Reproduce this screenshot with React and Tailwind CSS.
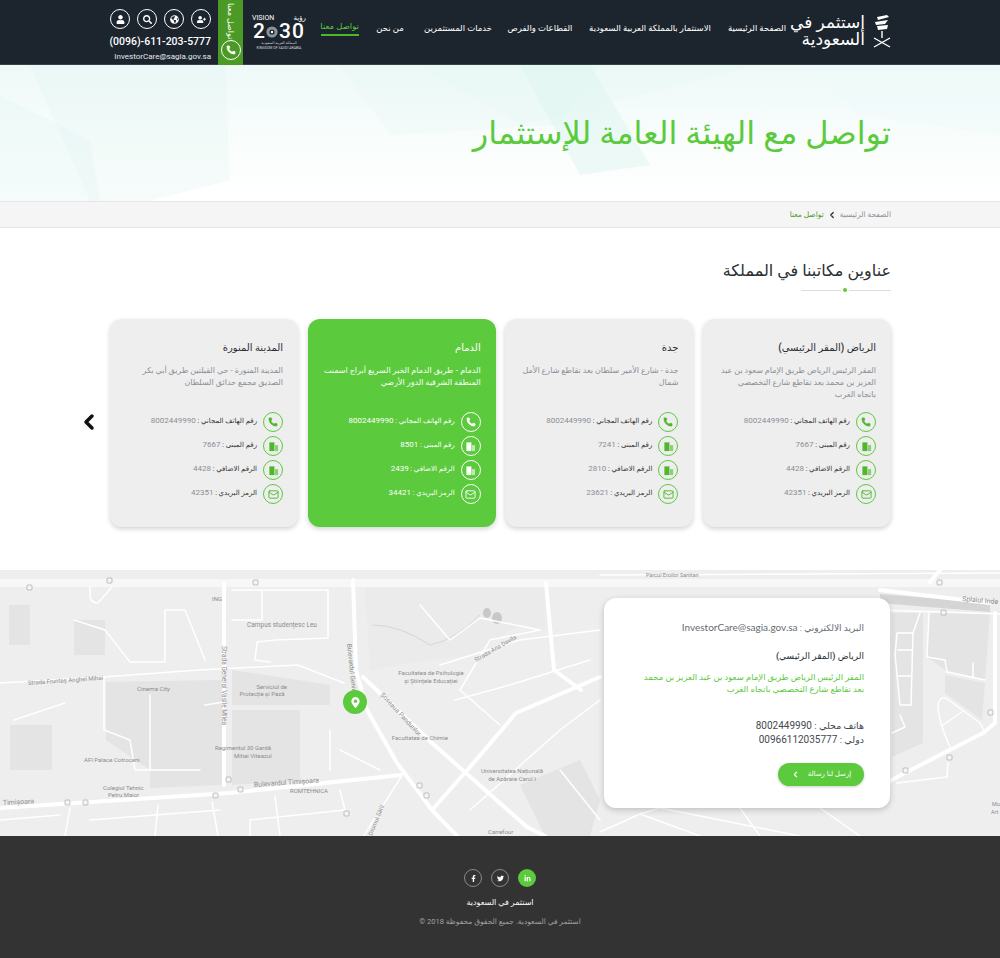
import React from 'react';
import { ChevronLeft, Mail, Phone } from 'lucide-react';
import { FaFacebookF, FaTwitter, FaLinkedinIn, FaUser, FaSearch, FaGlobeAmericas, FaUserPlus, FaMapMarkerAlt } from 'react-icons/fa';

const navItems = [
  { label: 'الصفحة الرئيسية', w: 'w-[84px]' },
  { label: 'الاستثمار بالمملكة العربية السعودية', w: 'w-[130px]' },
  { label: 'القطاعات والفرص', w: 'w-[90px]' },
  { label: 'خدمات المستثمرين', w: 'w-[74px]' },
  { label: 'من نحن', w: 'w-[62px]' },
];

const offices = [
  {
    title: 'الرياض (المقر الرئيسي)',
    address: ['المقر الرئيس الرياض طريق الإمام سعود بن عبد', 'العزيز بن محمد بعد تقاطع شارع التخصصي', 'باتجاه الغرب'],
    building: '7667',
    extra: '4428',
    postal: '42351',
  },
  {
    title: 'جدة',
    address: ['جدة - شارع الأمير سلطان بعد تقاطع شارع الأمل', 'شمال'],
    building: '7241',
    extra: '2810',
    postal: '23621',
  },
  {
    title: 'الدمام',
    address: ['الدمام - طريق الدمام الخبر السريع أبراج اسمنت', 'المنطقة الشرقية الدور الأرضي'],
    building: '8501',
    extra: '2439',
    postal: '34421',
    active: true,
  },
  {
    title: 'المدينة المنورة',
    address: ['المدينة المنورة - حي القبلتين طريق أبي بكر', 'الصديق مجمع حدائق السلطان'],
    building: '7667',
    extra: '4428',
    postal: '42351',
  },
];

function BuildingIcon() {
  return (
    <svg width="11" height="11" viewBox="0 0 12 12" fill="currentColor">
      <path d="M1.5 1.5h5.5v9.5H1.5z" />
      <path d="M7.6 4.5H11V11H7.6z" fillOpacity="0.6" />
    </svg>
  );
}

function TopIcon({ children }) {
  return (
    <div className="flex h-5 w-5 items-center justify-center rounded-full border border-white text-[9px] text-white">
      {children}
    </div>
  );
}

function Logo() {
  return (
    <div className="flex w-[92px] items-center gap-[8px]">
      <svg width="18" height="34" viewBox="0 0 18 34" fill="none" stroke="#fff" className="shrink-0">
        <path d="M4 3 L14 1 L16 3 L5 6 Z" fill="#fff" stroke="none" />
        <path d="M2 8 L15 6 L12 10 L3 11 Z" fill="#fff" stroke="none" />
        <path d="M4 12 L15 11 L14 15 L5 16 Z" fill="#fff" stroke="none" />
        <path d="M9 17 V24" strokeWidth="1.4" />
        <path d="M1 24 L17 33 M17 24 L1 33" strokeWidth="1.4" />
      </svg>
      <div className="whitespace-nowrap text-[17px] leading-[17px] text-white">
        <div>إستثمر في</div>
        <div>السعودية</div>
      </div>
    </div>
  );
}

function Vision() {
  return (
    <div className="flex w-[54px] flex-col items-center text-white" dir="ltr">
      <div className="flex w-full items-center justify-between text-[7px] leading-[8px]">
        <span>VISION</span>
        <span>رؤية</span>
      </div>
      <div className="flex h-[19px] items-center text-[21px] font-medium leading-[19px] tracking-[1px]">
        <span>2</span>
        <svg width="12" height="12" viewBox="0 0 12 12" className="mr-[1px]">
          <circle cx="6" cy="6" r="5.6" fill="#8b949a" />
          <circle cx="6" cy="6" r="2.6" fill="#1c252e" />
          <circle cx="6" cy="6" r="1.2" fill="#fff" />
        </svg>
        <span>30</span>
      </div>
      <div className="h-[5px] whitespace-nowrap text-[3.5px] leading-[5px] text-gray-300">المملكة العربية السعودية</div>
      <div className="h-[5px] whitespace-nowrap text-[3.5px] leading-[5px] text-gray-300">KINGDOM OF SAUDI ARABIA</div>
    </div>
  );
}

function Header() {
  return (
    <header className="h-[65px] border-b border-[#3a4249] bg-[#1c252e]">
      <div className="ml-[110px] flex h-full w-[781px] items-start justify-between" dir="rtl">
        <div className="flex h-full items-center pb-[3px]">
          <Logo />
          <nav className="flex items-center pb-[5px] text-[8.5px] text-white">
            {navItems.map((item) => (
              <a key={item.label} className={`${item.w} flex justify-center whitespace-nowrap`}>{item.label}</a>
            ))}
            <a className="w-[38px] whitespace-nowrap border-b-2 border-[#4eb82b] pb-[2px] text-center text-[8.5px] text-[#5bca3c]">تواصل معنا</a>
          </nav>
        </div>
        <div className="flex h-full items-start">
          <div className="ml-[9px] mt-[14px]"><Vision /></div>
          <div className="flex h-[65px] w-[25px] flex-col items-center bg-[#4a9a25] pt-[3px]">
            <span className="flex h-[36px] items-center justify-center whitespace-nowrap text-[8px] leading-[25px] text-white [writing-mode:vertical-rl]">تواصل معنا</span>
            <div className="mt-[1px] flex h-5 w-5 items-center justify-center rounded-full border border-white text-white">
              <Phone size={10} fill="currentColor" strokeWidth={1} />
            </div>
          </div>
          <div className="mr-[7px] flex w-[101px] flex-col items-end pt-[9px]" dir="ltr">
            <div className="flex gap-[7px]">
              <TopIcon><FaUser /></TopIcon>
              <TopIcon><FaSearch /></TopIcon>
              <TopIcon><FaGlobeAmericas /></TopIcon>
              <TopIcon><FaUserPlus /></TopIcon>
            </div>
            <div className="mt-[4px] whitespace-nowrap font-['Roboto',sans-serif] text-[10.5px] font-medium leading-[17px] text-white">(0096)-611-203-5777</div>
            <div className="whitespace-nowrap font-['Roboto',sans-serif] text-[8px] leading-[13px] text-gray-200">InvestorCare@sagia.gov.sa</div>
          </div>
        </div>
      </div>
    </header>
  );
}

function Hero() {
  return (
    <section className="relative h-[136px] overflow-hidden bg-gradient-to-b from-[#eef9f8] via-[#f8fdfc] to-white">
      <svg className="absolute inset-0 h-full w-full" viewBox="0 0 1000 136" preserveAspectRatio="none">
        <path d="M30 0 L225 0 L230 115 L150 136 L90 136 Z" fill="#dff5f1" fillOpacity="0.25" />
        <path d="M0 30 L90 75 L100 136 L0 136 Z" fill="#dff5f1" fillOpacity="0.3" />
        <path d="M340 0 L600 0 L560 60 L390 70 Z" fill="#dff5f1" fillOpacity="0.2" />
        <path d="M520 0 L590 0 L650 100 L580 110 Z" fill="#d6f2ee" fillOpacity="0.4" />
        <path d="M420 0 L760 0 L520 60 Z" fill="#e3f7f3" fillOpacity="0.3" />
        <path d="M800 0 L1000 0 L1000 70 L860 50 Z" fill="#eefafa" fillOpacity="0.4" />
      </svg>
      <div className="relative ml-[110px] w-[781px] pt-[46px]" dir="rtl">
        <h1 className="text-[32px] font-normal leading-[44px] text-[#5bca3c]">تواصل مع الهيئة العامة للإستثمار</h1>
      </div>
    </section>
  );
}

function Breadcrumb() {
  return (
    <div className="h-[27px] border-y border-[#e6e6e6] bg-[#f5f5f5]">
      <div className="ml-[110px] flex h-full w-[781px] items-center gap-[3px] text-[7.5px]" dir="rtl">
        <span className="text-[#8a9199]">الصفحة الرئيسية</span>
        <ChevronLeft size={10} strokeWidth={3} className="text-[#333]" />
        <span className="text-[#4a9a25]">تواصل معنا</span>
      </div>
    </div>
  );
}

function InfoRow({ active, icon, label, value }) {
  return (
    <div className="flex h-[24px] items-center gap-[6px]">
      <div className={`flex h-5 w-5 shrink-0 items-center justify-center rounded-full border ${active ? 'border-white text-white' : 'border-[#5bca3c] text-[#4eb82b]'}`}>
        {icon}
      </div>
      <div className="whitespace-nowrap pb-[3px] text-[7px]">
        <span className={active ? 'text-white' : 'text-[#333]'}>{label} : </span>
        <span className={`text-[8px] ${active ? 'text-white' : 'text-[#8a8f96]'}`}>{value}</span>
      </div>
    </div>
  );
}

function OfficeCard({ office }) {
  const { active } = office;
  return (
    <div className={`h-[208px] w-[188px] rounded-[12px] pl-[8px] pr-[15px] pt-[22px] shadow-[0_2px_5px_rgba(0,0,0,0.18)] ${active ? 'bg-[#5bca3c] text-white' : 'bg-[#eeeeee]'}`}>
      <h3 className={`text-[10px] font-medium leading-[14px] ${active ? 'text-white' : 'text-[#2a2f35]'}`}>{office.title}</h3>
      <div className={`mt-[10px] h-[45px] whitespace-nowrap text-[8px] leading-[12px] ${active ? 'font-medium text-white' : 'text-[#8a8f96]'}`}>
        {office.address.map((line) => <div key={line}>{line}</div>)}
      </div>
      <div>
        <InfoRow active={active} icon={<Phone size={10} fill="currentColor" strokeWidth={1} />} label="رقم الهاتف المجاني" value="8002449990" />
        <InfoRow active={active} icon={<BuildingIcon />} label="رقم المبنى" value={office.building} />
        <InfoRow active={active} icon={<BuildingIcon />} label="الرقم الاضافي" value={office.extra} />
        <InfoRow active={active} icon={<Mail size={11} />} label="الرمز البريدي" value={office.postal} />
      </div>
    </div>
  );
}

function Offices() {
  return (
    <section className="relative h-[342px] bg-white">
      <div className="ml-[110px] w-[781px]" dir="rtl">
        <div className="pt-[31px]">
          <h2 className="text-[16px] font-normal leading-[24px] text-[#2a2f35]">عناوين مكاتبنا في المملكة</h2>
          <div className="mt-[5px] flex w-[90px] items-center">
            <span className="h-px w-[42px] bg-[#dddddd]" />
            <span className="mx-[2px] h-1 w-1 rounded-full bg-[#5bca3c]" />
            <span className="h-px flex-1 bg-[#dddddd]" />
          </div>
        </div>
        <div className="mt-[27px] flex justify-between">
          {offices.map((office) => (
            <OfficeCard key={office.title} office={office} />
          ))}
        </div>
      </div>
      <ChevronLeft size={24} strokeWidth={3.5} className="absolute left-[77px] top-[182px] text-[#111]" />
    </section>
  );
}

const wideRoads = [
  'M224 13 L224 215',
  'M353 10 L356 100 L367 140 L397 193 L432 240 L458 267',
  'M363 107 L432 173 L527 257 L545 266',
  'M0 238 L229 223 L401 205',
  'M546 13 L554 100 L581 120',
  'M600 107 L516 143 L470 197 L432 240',
  'M995 43 L995 153 L983 163 L897 207 L885 214',
  'M880 20 L990 33',
  'M940 0 L930 12',
];

const thinRoads = [
  'M0 113 L103 107 L199 100 L298 95 L344 113',
  'M401 207 L363 267',
  'M232 20 L262 20 L262 50 L232 50 M262 20 L328 20 L328 68 L275 70 L257 72 L255 90 L270 92',
  'M90 17 L90 25 Q90 33 98 33 L112 17',
  'M74 50 L105 60 L130 92 L165 92 L165 40 L185 40 L205 90',
  'M104 108 L104 160 L130 170 L135 200 L175 200',
  'M150 125 L150 200 M175 200 L200 200',
  'M14 150 L65 133 M205 135 L224 132',
  'M420 35 L450 70 L480 48 L540 60 L490 70 L460 120 L500 155',
  'M440 95 L520 70 L600 60',
  'M455 130 L510 115 L590 90',
  'M470 240 L560 160 L600 130 M560 200 L600 250',
  'M330 160 L330 200 M340 180 L380 200',
  'M158 235 L155 266 M212 232 L218 266 M275 226 L280 266 M340 220 L345 240 L250 250 L250 266',
  'M70 238 L65 266 M0 250 L60 245 M90 250 L220 240',
  'M600 262 L640 244 L700 266 M640 244 L660 238 L800 266 M740 238 L760 266 M820 238 L860 266',
  'M897 63 L913 63 L911 135 L900 135 L895 85 Z M898 80 L912 80 M897 106 L911 106',
  'M920 43 L913 63 M929 43 L927 87 L945 90 L947 102 L985 110 M973 93 L973 107',
  'M938 135 Q940 126 946 128 L980 153 L985 163 M938 135 Q938 150 950 177 M943 155 L962 142',
  'M897 213 L947 207 L948 193 M900 145 L905 157 L892 163',
  'M600 5 L1000 3 M880 40 L1000 44',
];

const labels = [
  { x: 212, y: 31, t: 'ING', s: 6 },
  { x: 282, y: 57, t: 'Campus studențesc Leu', s: 6.5, a: 'middle' },
  { x: 28, y: 115, t: 'Strada Fruntaș Anghel Mihai', s: 6, r: -4 },
  { x: 137, y: 121, t: 'Cinema City', s: 6.2 },
  { x: 287, y: 119, t: 'Serviciul de', s: 6, a: 'end' },
  { x: 287, y: 126, t: 'Protecție și Pază', s: 6, a: 'middle', dx: -25 },
  { x: 431, y: 105, t: 'Facultatea de Psihologie', s: 6, a: 'middle' },
  { x: 431, y: 113, t: 'și Științele Educației', s: 6, a: 'middle' },
  { x: 448, y: 170, t: 'Facultatea de Chimie', s: 6, a: 'end' },
  { x: 380, y: 125, t: 'Șoseaua Pandurilor', s: 6.5, r: 47 },
  { x: 476, y: 92, t: 'Strada Ana Davila', s: 6, r: -30 },
  { x: 512, y: 203, t: 'Universitatea Națională', s: 6, a: 'middle' },
  { x: 512, y: 211, t: 'de Apărare Carol I', s: 6, a: 'middle' },
  { x: 215, y: 180, t: 'Regimentul 30 Gardă', s: 6 },
  { x: 234, y: 188, t: 'Mihai Viteazul', s: 6 },
  { x: 84, y: 192, t: 'AFI Palace Cotroceni', s: 6 },
  { x: 103, y: 220, t: 'Colegiul Tehnic', s: 6 },
  { x: 108, y: 227, t: 'Petru Maior', s: 6 },
  { x: 254, y: 217, t: 'Bulevardul Timișoara', s: 7, r: -4 },
  { x: 290, y: 223, t: 'ROMTEHNICA', s: 6 },
  { x: 3, y: 235, t: 'Timișoara', s: 7, r: -3 },
  { x: 488, y: 264, t: 'Carrefour', s: 6 },
  { x: 222, y: 76, t: 'Strada General Vasile Milea', s: 6.5, r: 90 },
  { x: 347, y: 74, t: 'Bulevardul Geniului', s: 6.5, r: 84 },
  { x: 372, y: 266, t: 'Drumul Sării', s: 6, r: -68 },
  { x: 962, y: 31, t: 'Splaiul Inde', s: 7, r: 5 },
  { x: 646, y: 7, t: 'Parcul Eroilor Sanitari', s: 5.5 },
  { x: 992, y: 236, t: 'Mu', s: 5.5 },
  { x: 991, y: 244, t: 'Art', s: 5.5 },
];

const parks = [
  'M9 35 L30 35 L30 75 L9 75 Z',
  'M74 50 L105 50 L105 85 L74 85 Z',
  'M106 112 L222 110 L222 215 L150 218 L150 200 L106 170 Z',
  'M232 100 L330 115 L330 135 L232 135 Z',
  'M232 140 L300 140 L300 210 L232 215 Z',
  'M10 155 L52 155 L52 200 L10 200 Z',
  'M520 215 L580 190 L600 230 L590 266 L545 266 Z',
  'M892 43 L923 43 L923 173 L892 187 Z',
  'M929 43 L990 43 L985 110 L945 100 L927 87 Z',
  'M945 105 L985 113 L982 150 L945 123 Z',
];

const shields = [[27, 15], [107, 8], [253, 10], [344, 241], [417, 213], [424, 223], [65, 230], [83, 230], [226, 207], [238, 217], [213, 223], [937, 10], [941, 40], [988, 140], [947, 185], [903, 198]];

function MapCanvas() {
  return (
    <svg className="absolute inset-0 h-full w-full" viewBox="0 0 1000 266" fontFamily="Roboto, sans-serif">
      <rect width="1000" height="266" fill="#eeeeee" />
      {parks.map((d) => <path key={d} d={d} fill="#e4e4e4" />)}
      <path d="M365 16 L545 16 L545 60 L520 55 L470 85 L430 90 L370 100 Z" fill="#ebebeb" />
      <path d="M372 55 Q400 55 430 75 Q455 70 480 45" fill="none" stroke="#d0d0d0" strokeWidth="0.8" />
      <ellipse cx="487" cy="43" rx="4" ry="5" fill="#c8c8c8" />
      <ellipse cx="497" cy="48" rx="5" ry="6" fill="#c8c8c8" />
      <path d="M0 9 H1000 V17 H0 Z" fill="#f7f7f7" />
      <path d="M880 24 L990 33 L990 42 L880 33 Z" fill="#d5d5d5" />
      <g fill="none" stroke="#ffffff" strokeLinecap="round" strokeLinejoin="round">
        {wideRoads.map((d) => <path key={d} d={d} strokeWidth="4" />)}
        {thinRoads.map((d) => <path key={d} d={d} strokeWidth="1.5" />)}
      </g>
      {shields.map(([x, y]) => (
        <rect key={`${x}-${y}`} x={x} y={y} width="5" height="5" rx="1" fill="#f5f5f5" stroke="#9a9a9a" strokeWidth="0.6" />
      ))}
      {labels.map((l) => (
        <text
          key={l.t}
          x={l.x + (l.dx || 0)}
          y={l.y}
          fontSize={l.s}
          fill="#8c8c8c"
          textAnchor={l.a || 'start'}
          transform={l.r ? `rotate(${l.r} ${l.x} ${l.y})` : undefined}
        >
          {l.t}
        </text>
      ))}
    </svg>
  );
}

function MapSection() {
  return (
    <section className="relative h-[266px] overflow-hidden">
      <MapCanvas />
      <div className="absolute left-[343px] top-[120px] flex h-[24px] w-[24px] items-center justify-center rounded-full bg-[#5bca3c] text-[11px] text-white">
        <FaMapMarkerAlt />
      </div>
      <div className="absolute left-[604px] top-[28px] h-[210px] w-[286px] rounded-[12px] bg-white px-[26px] pt-[21px] shadow-[0_2px_6px_rgba(0,0,0,0.2)]" dir="rtl">
        <p className="text-[9px] leading-[16px] text-[#666c73]">البريد الالكتروني : <span className="font-['Lato',sans-serif] text-[10px]">InvestorCare@sagia.gov.sa</span></p>
        <h4 className="mt-[12px] text-[9px] font-medium leading-[16px] text-[#2a2f35]">الرياض (المقر الرئيسي)</h4>
        <div className="mt-[7px] whitespace-nowrap text-[8.5px] leading-[12px] text-[#5bca3c]">
          <div>المقر الرئيس الرياض طريق الإمام سعود بن عبد العزيز بن محمد</div>
          <div>بعد تقاطع شارع التخصصي باتجاه الغرب</div>
        </div>
        <p className="mt-[24px] text-[9.5px] leading-[14px] text-[#444a50]">هاتف محلي : <span className="text-[10px]">8002449990</span></p>
        <p className="text-[9.5px] leading-[14px] text-[#444a50]">دولي : <span className="text-[10px]">00966112035777</span></p>
        <div className="mt-[16px] flex h-[23px] w-[86px] items-center justify-center gap-[8px] rounded-full bg-[#5bca3c] text-[7px] text-white shadow-[0_1px_3px_rgba(0,0,0,0.2)]">
          <span>إرسل لنا رسالة</span>
          <ChevronLeft size={9} strokeWidth={3} />
        </div>
      </div>
    </section>
  );
}

function Footer() {
  const circle = 'flex h-[18px] w-[18px] items-center justify-center rounded-full text-[7px] text-white';
  return (
    <footer className="h-[122px] bg-[#333333] pt-[33px] text-center">
      <div className="flex justify-center gap-[9px]">
        <a className={`${circle} border border-[#8a8a8a]`}><FaFacebookF /></a>
        <a className={`${circle} border border-[#8a8a8a]`}><FaTwitter /></a>
        <a className={`${circle} bg-[#5bca3c]`}><FaLinkedinIn /></a>
      </div>
      <p className="mt-[9px] text-[8px] font-medium leading-[14px] text-white" dir="rtl">استثمر في السعودية</p>
      <p className="mt-[6px] text-[7.5px] leading-[12px] text-[#a0a0a0]" dir="rtl">استثمر في السعودية. جميع الحقوق محفوظة 2018 ©</p>
    </footer>
  );
}

export default function App() {
  return (
    <div className="h-[958px] w-[1000px] overflow-hidden bg-white font-['Roboto','DejaVu_Sans',sans-serif]">
      <Header />
      <Hero />
      <Breadcrumb />
      <Offices />
      <MapSection />
      <Footer />
    </div>
  );
}
